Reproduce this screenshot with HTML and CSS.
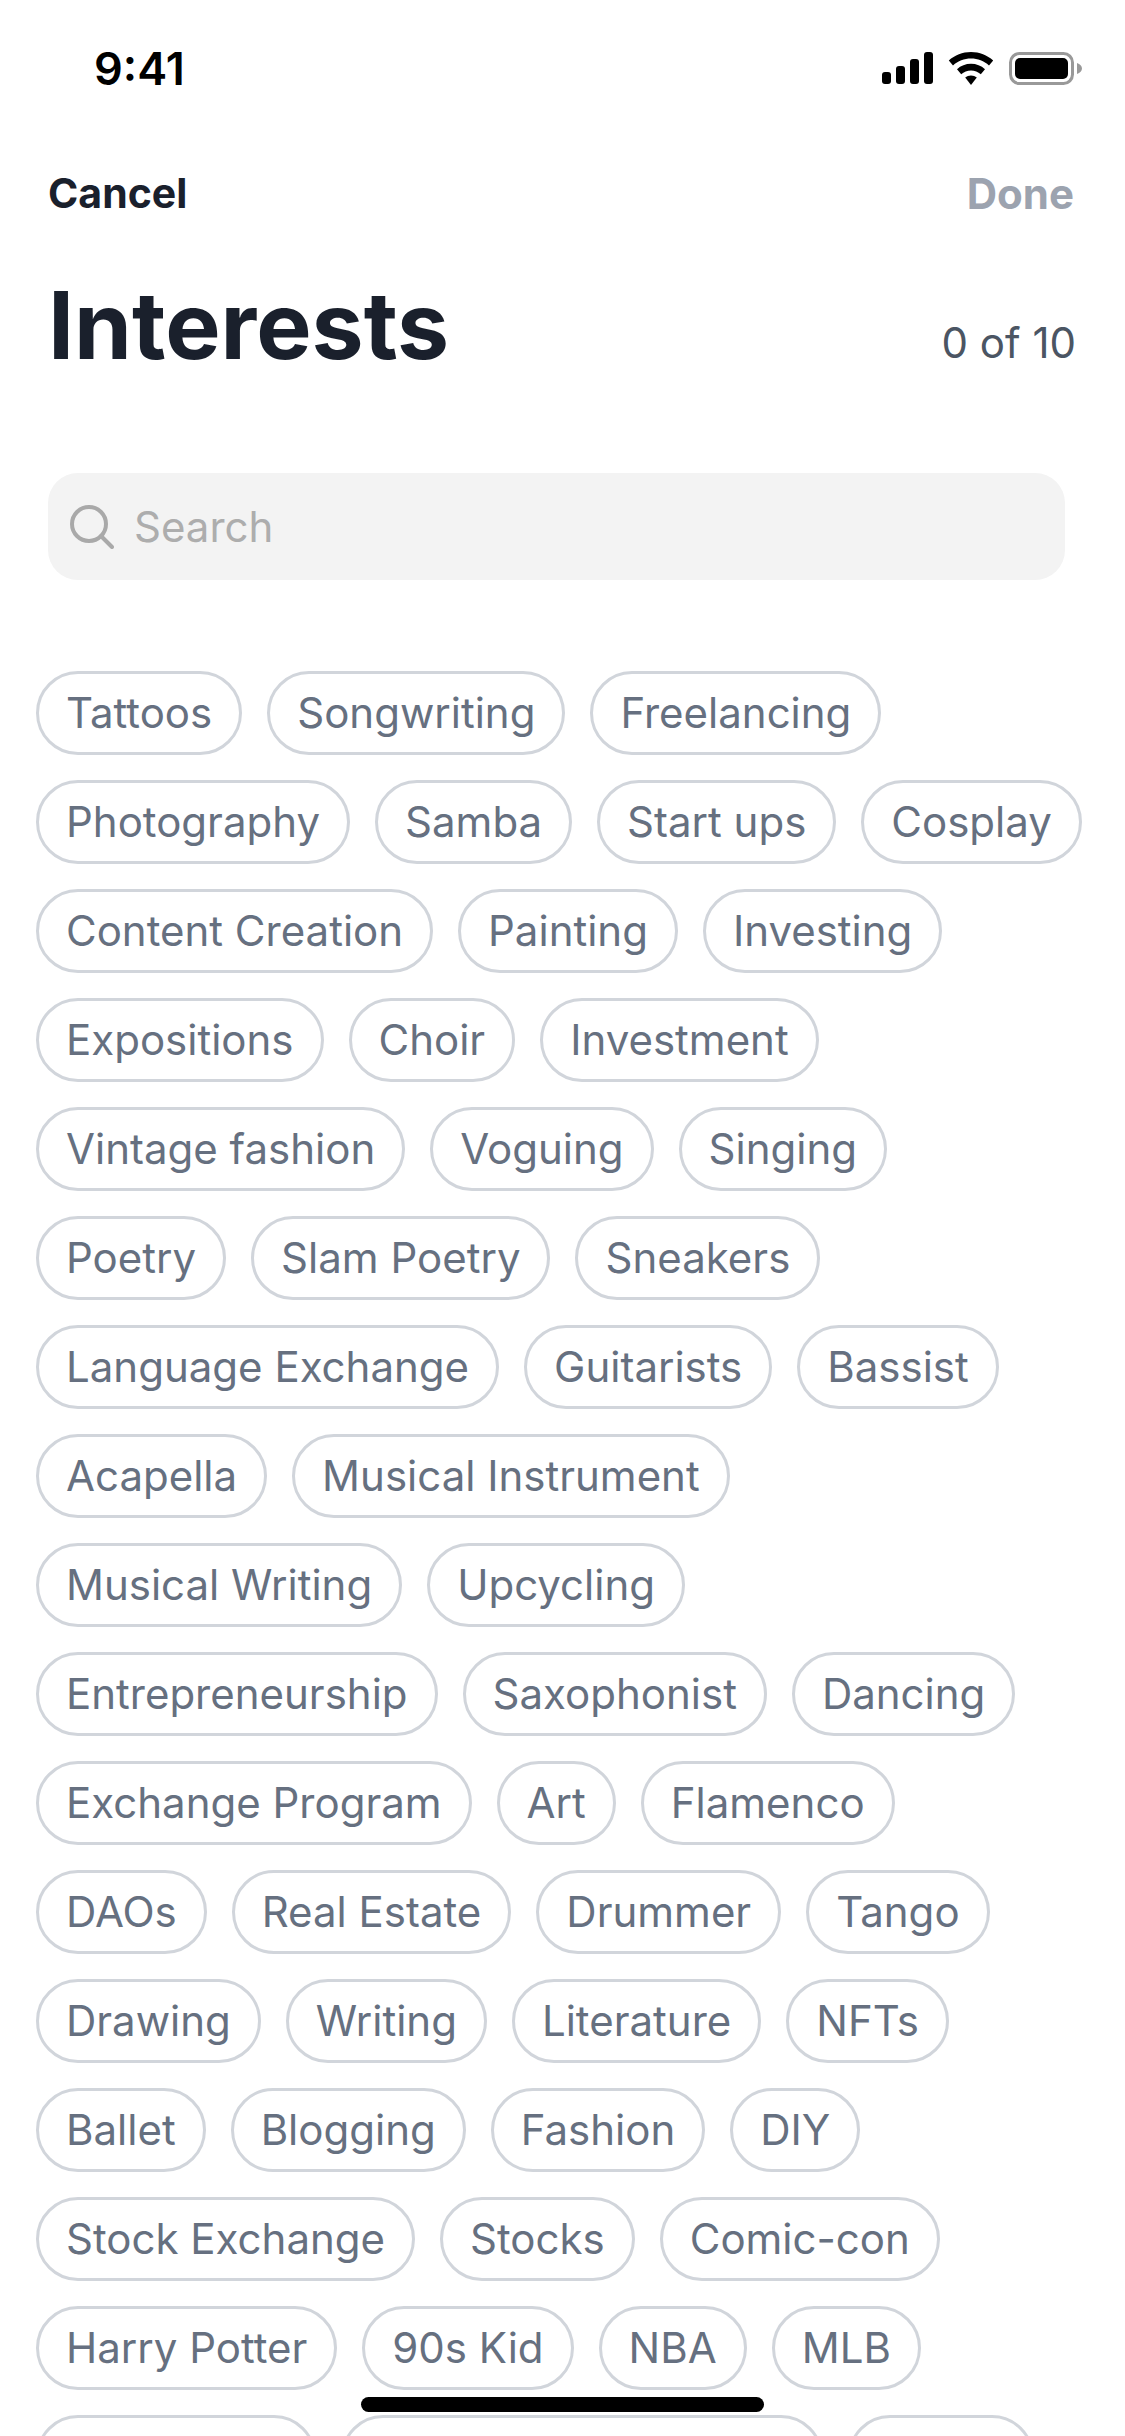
FILE: index.html
```html
<!DOCTYPE html>
<html lang="en">
<head>
    <meta charset="UTF-8">
    <meta name="viewport" content="width=device-width, initial-scale=1.0">
    <title>Interests</title>
    <link rel="stylesheet" href="styles.css">
</head>

<body>
    <div class="screen">
        <!-- Status bar -->
        <div class="status-bar">
            <span class="time">9:41</span>
            <div class="status-icons">
                <svg class="icon-signal" width="51" height="32" viewBox="0 0 51 32">
                    <rect x="0" y="20" width="9" height="12" rx="3"/>
                    <rect x="14" y="14" width="9" height="18" rx="3"/>
                    <rect x="28" y="7" width="9" height="25" rx="3"/>
                    <rect x="42" y="0" width="9" height="32" rx="3"/>
                </svg>
                <svg class="icon-wifi" width="46" height="33" viewBox="0 0 46 33">
                    <path d="M23 0C14.500 0 6.800 3.200 0.800 8.500L5 13.500C10 9.200 16.200 6.600 23 6.600C29.800 6.600 36 9.200 41 13.500L45.200 8.500C39.200 3.200 31.500 0 23 0Z"/>
                    <path d="M23 11.800C17.700 11.800 12.800 13.800 9 17.200L13.200 22.200C15.900 19.900 19.300 18.500 23 18.500C26.700 18.500 30.100 19.900 32.800 22.200L37 17.200C33.200 13.800 28.300 11.800 23 11.800Z"/>
                    <path d="M23 23.500C20.800 23.500 18.800 24.300 17.200 25.600L23 33L28.800 25.600C27.200 24.300 25.200 23.500 23 23.500Z"/>
                </svg>
                <svg class="icon-battery" width="73" height="33" viewBox="0 0 73 33">
                    <rect x="1.500" y="1.500" width="62" height="30" rx="9" fill="none" stroke="#999" stroke-width="3"/>
                    <rect x="6" y="6" width="53" height="21" rx="5"/>
                    <path d="M68 11C71 12 73 14 73 16.500C73 19 71 21 68 22Z" fill="#999"/>
                </svg>
            </div>
        </div>

        <!-- Nav -->
        <div class="nav">
            <span class="nav-cancel">Cancel</span>
            <span class="nav-done">Done</span>
        </div>

        <div class="title-row">
            <h1 class="title">Interests</h1>
            <span class="count">0 of 10</span>
        </div>

        <div class="search">
            <svg class="icon-search" width="44" height="44" viewBox="0 0 44 44" fill="none" stroke="#a9a9a9" stroke-width="4" stroke-linecap="round">
                <circle cx="19" cy="19" r="17"/>
                <path d="M31 31L42 42"/>
            </svg>
            <span class="search-text">Search</span>
        </div>

        <!-- Chips -->
        <div class="chips">
            <div class="chip-row"><span class="chip">Tattoos</span><span class="chip">Songwriting</span><span class="chip">Freelancing</span></div>
            <div class="chip-row"><span class="chip">Photography</span><span class="chip">Samba</span><span class="chip">Start ups</span><span class="chip">Cosplay</span></div>
            <div class="chip-row"><span class="chip">Content Creation</span><span class="chip">Painting</span><span class="chip">Investing</span></div>
            <div class="chip-row"><span class="chip">Expositions</span><span class="chip">Choir</span><span class="chip">Investment</span></div>
            <div class="chip-row"><span class="chip">Vintage fashion</span><span class="chip">Voguing</span><span class="chip">Singing</span></div>
            <div class="chip-row"><span class="chip">Poetry</span><span class="chip">Slam Poetry</span><span class="chip">Sneakers</span></div>
            <div class="chip-row"><span class="chip">Language Exchange</span><span class="chip">Guitarists</span><span class="chip">Bassist</span></div>
            <div class="chip-row"><span class="chip">Acapella</span><span class="chip">Musical Instrument</span></div>
            <div class="chip-row"><span class="chip">Musical Writing</span><span class="chip">Upcycling</span></div>
            <div class="chip-row"><span class="chip">Entrepreneurship</span><span class="chip">Saxophonist</span><span class="chip">Dancing</span></div>
            <div class="chip-row"><span class="chip">Exchange Program</span><span class="chip">Art</span><span class="chip">Flamenco</span></div>
            <div class="chip-row"><span class="chip">DAOs</span><span class="chip">Real Estate</span><span class="chip">Drummer</span><span class="chip">Tango</span></div>
            <div class="chip-row"><span class="chip">Drawing</span><span class="chip">Writing</span><span class="chip">Literature</span><span class="chip">NFTs</span></div>
            <div class="chip-row"><span class="chip">Ballet</span><span class="chip">Blogging</span><span class="chip">Fashion</span><span class="chip">DIY</span></div>
            <div class="chip-row"><span class="chip">Stock Exchange</span><span class="chip">Stocks</span><span class="chip">Comic-con</span></div>
            <div class="chip-row"><span class="chip">Harry Potter</span><span class="chip">90s Kid</span><span class="chip">NBA</span><span class="chip">MLB</span></div>
            <div class="chip-row"><span class="chip chip-a"></span><span class="chip chip-b"></span><span class="chip chip-c"></span></div>
        </div>

        <div class="home-indicator"></div>
    </div>
</body>
</html>
```

FILE: styles.css
```css
* {
    box-sizing: border-box;
    margin: 0;
    padding: 0;
}

body {
    font-family: 'Inter', sans-serif;
    background-color: #fff;
}

.screen {
    position: relative;
    width: 1125px;
    height: 2436px;
    overflow: hidden;
    background-color: #fff;
}

.status-bar {
    height: 136px;
    padding: 0 43px 0 94px;
    display: flex;
    justify-content: space-between;
    align-items: center;
}

.time {
    font-size: 45px;
    font-weight: 600;
    color: #000;
}

.status-icons {
    display: flex;
    align-items: center;
    gap: 15px;
}

.status-icons svg {
    display: block;
    fill: #000;
}

.nav {
    padding: 0 51px 0 48px;
    height: 114px;
    display: flex;
    justify-content: space-between;
    align-items: center;
    font-size: 41px;
    font-weight: 700;
}

.nav-cancel {
    color: #1a202c;
}

.nav-done {
    color: #9ca3af;
    font-size: 42px;
}

.title-row {
    padding: 0 49px 0 48px;
    height: 144px;
    display: flex;
    justify-content: space-between;
    align-items: center;
}

.title {
    font-size: 93px;
    font-weight: 700;
    color: #1a202c;
    padding-top: 5px;
}

.count {
    font-size: 42px;
    color: #4b5563;
    padding-top: 40px;
}

.search {
    margin: 79px 60px 0 48px;
    height: 107px;
    padding: 0 22px;
    display: flex;
    align-items: center;
    gap: 20px;
    background-color: #f3f3f3;
    border-radius: 30px;
}

.search-text {
    font-size: 42px;
    color: #adadad;
}

.chips {
    padding: 91px 0 0 36px;
    display: flex;
    flex-direction: column;
    gap: 25px;
}

.chip-row {
    display: flex;
    gap: 25px;
}

.chip {
    height: 84px;
    padding: 0 27px 2px;
    display: flex;
    align-items: center;
    border: 3px solid #d1d5db;
    border-radius: 42px;
    font-size: 42px;
    color: #667080;
    white-space: nowrap;
}

.chip-a {
    width: 280px;
}

.chip-b {
    width: 482px;
}

.chip-c {
    width: 186px;
}

.home-indicator {
    position: absolute;
    left: 361px;
    top: 2397px;
    width: 403px;
    height: 15px;
    background-color: #000;
    border-radius: 8px;
}
```
